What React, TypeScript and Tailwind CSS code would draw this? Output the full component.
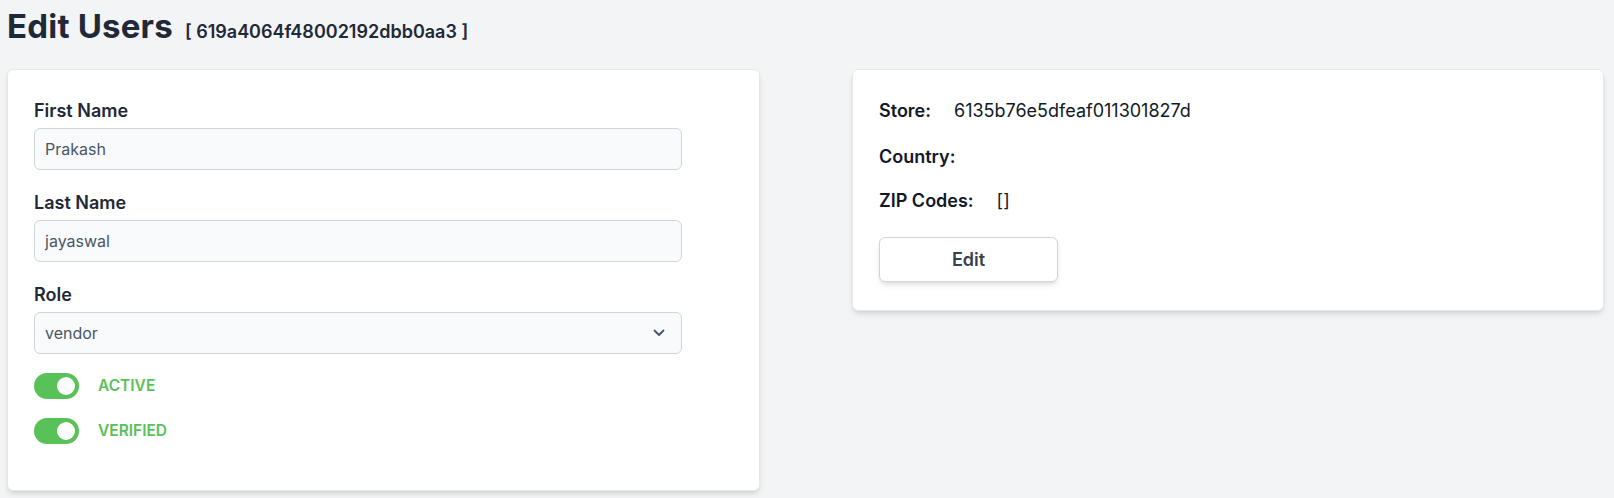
import React from "react";

function Toggle({ label }: { label: string }) {
  return (
    <div className="flex items-center">
      <div className="flex h-[26px] w-[45px] items-center justify-end rounded-full bg-[#58c158] pr-[4px]">
        <div className="h-[18px] w-[18px] rounded-full bg-white" />
      </div>
      <span className="ml-[19px] text-[15.5px] font-semibold text-[#58c158]">{label}</span>
    </div>
  );
}

function Field({ label, value, select }: { label: string; value: string; select?: boolean }) {
  return (
    <div className="flex flex-col">
      <label className="text-[18px] leading-[24px] font-semibold text-[#1f2937]">{label}</label>
      <div className="mt-[5px] flex h-[42px] w-[648px] items-center justify-between rounded-[6px] border border-[#d1d5db] bg-[#f9fafb] pl-[10px] pr-[16px] text-[16px] text-[#4b5563]">
        <span>{value}</span>
        {select && (
          <svg width="12" height="8" viewBox="0 0 12 8" fill="none">
            <path d="M1.5 1.5L6 6L10.5 1.5" stroke="#4b5563" strokeWidth="1.8" strokeLinecap="round" strokeLinejoin="round" />
          </svg>
        )}
      </div>
    </div>
  );
}

export default function App() {
  return (
    <div className="min-h-[498px] bg-[#f3f4f6] pl-[7px] pr-[10px] pt-[6px] font-['Inter',sans-serif] text-[#1f2937]">
      <div className="flex items-baseline">
        <h1 className="text-[33px] leading-[40px] font-bold tracking-[0.2px] text-[#1f2937]">Edit Users</h1>
        <span className="ml-[12px] text-[18px] font-semibold text-[#1f2937]">[ 619a4064f48002192dbb0aa3 ]</span>
      </div>
      <div className="mt-[23px] flex items-start gap-[92px]">
        <div className="w-[753px] rounded-[6px] border border-[#e5e7eb] bg-white pl-[26px] pt-[29px] pb-[46px] shadow-md">
          <Field label="First Name" value="Prakash" />
          <div className="mt-[21px]">
            <Field label="Last Name" value="jayaswal" />
          </div>
          <div className="mt-[21px]">
            <Field label="Role" value="vendor" select />
          </div>
          <div className="mt-[19px]">
            <Toggle label="ACTIVE" />
          </div>
          <div className="mt-[19px]">
            <Toggle label="VERIFIED" />
          </div>
        </div>
        <div className="flex-1 rounded-[6px] border border-[#e5e7eb] bg-white px-[26px] pt-[29px] pb-[28px] shadow-md">
          <div className="flex text-[18px] leading-[24px]">
            <span className="mr-[23px] font-semibold text-[#111827]">Store:</span>
            <span className="text-[#111827]">6135b76e5dfeaf011301827d</span>
          </div>
          <div className="mt-[22px] flex text-[18px] leading-[24px]">
            <span className="font-semibold text-[#111827]">Country:</span>
          </div>
          <div className="mt-[20px] flex text-[18px] leading-[24px]">
            <span className="mr-[23px] font-semibold text-[#111827]">ZIP Codes:</span>
            <span className="text-[#111827]">[]</span>
          </div>
          <button className="mt-[24px] h-[45px] w-[179px] rounded-[6px] border border-[#d1d5db] bg-white text-[18px] font-semibold text-[#374151] shadow-md">
            Edit
          </button>
        </div>
      </div>
    </div>
  );
}
